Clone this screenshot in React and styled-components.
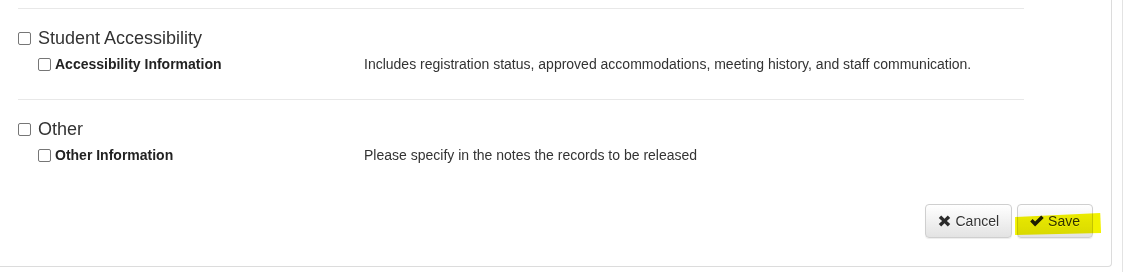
import React from 'react';
import styled, { createGlobalStyle } from 'styled-components';

const GlobalStyle = createGlobalStyle`
  body {
    margin: 0;
    background: #fff;
    font-family: "Liberation Sans", Arial, sans-serif;
    color: #333;
  }
`;

const sections = [
  {
    title: 'Student Accessibility',
    items: [
      {
        label: 'Accessibility Information',
        description:
          'Includes registration status, approved accommodations, meeting history, and staff communication.',
      },
    ],
  },
  {
    title: 'Other',
    items: [
      {
        label: 'Other Information',
        description: 'Please specify in the notes the records to be released',
      },
    ],
  },
];

const RemoveIcon = () => (
  <svg width="13" height="12" viewBox="0 0 13 12">
    <path
      d="M0.8 2.9 L3.2 0.5 L6.5 3.7 L9.8 0.5 L12.2 2.9 L8.9 6 L12.2 9.1 L9.8 11.5 L6.5 8.3 L3.2 11.5 L0.8 9.1 L4.1 6 Z"
      fill="#2a2a2a"
    />
  </svg>
);

const OkIcon = () => (
  <svg width="14" height="12" viewBox="0 0 14 12">
    <path d="M0.2 6.4 L2.6 4 L5.1 6.5 L11.2 0.4 L13.7 2.9 L5.1 11.5 Z" fill="#1e1e1e" />
  </svg>
);

const App = () => {
  return (
    <>
      <GlobalStyle />
      <Wrapper>
        <Panel>
          <SectionList>
            {sections.map((section) => (
              <Section key={section.title}>
                <TitleRow>
                  <Check type="checkbox" />
                  <Title>{section.title}</Title>
                </TitleRow>
                {section.items.map((item) => (
                  <ItemRow key={item.label}>
                    <ItemLabel>
                      <Check type="checkbox" />
                      <strong>{item.label}</strong>
                    </ItemLabel>
                    <Description>{item.description}</Description>
                  </ItemRow>
                ))}
              </Section>
            ))}
          </SectionList>
          <Footer>
            <Button>
              <RemoveIcon /> Cancel
            </Button>
            <SaveWrap>
              <Button>
                <OkIcon /> Save
              </Button>
              <Highlight />
            </SaveWrap>
          </Footer>
        </Panel>
      </Wrapper>
    </>
  );
};

const Wrapper = styled.div`
  width: 1123px;
  box-sizing: border-box;
  border-right: 1px solid #e3e3e3;
  height: 272px;
`;

const Panel = styled.div`
  width: 1112px;
  height: 267px;
  box-sizing: border-box;
  border-right: 1px solid #dcdcdc;
  border-bottom: 1px solid #dcdcdc;
  border-bottom-right-radius: 4px;
  padding-top: 8px;
  display: flex;
  flex-direction: column;
`;

const SectionList = styled.div`
  margin-left: 18px;
  width: 1006px;
`;

const Section = styled.div`
  border-top: 1px solid #e8e8e8;
  padding: 19px 0 25px;
`;

const TitleRow = styled.label`
  display: flex;
  align-items: center;
  gap: 7px;
  height: 20px;
`;

const Check = styled.input`
  appearance: none;
  -webkit-appearance: none;
  box-sizing: border-box;
  width: 13px;
  height: 13px;
  margin: 0;
  flex: none;
  border: 1px solid #767676;
  border-radius: 2px;
  background: #fff;
`;

const Title = styled.span`
  font-size: 18px;
  line-height: 20px;
  color: #333;
`;

const ItemRow = styled.div`
  display: grid;
  grid-template-columns: 326px 1fr;
  align-items: center;
  margin: 6px 0 0 20px;
  height: 20px;
  font-size: 14px;
`;

const ItemLabel = styled.label`
  display: flex;
  align-items: center;
  gap: 4px;

  strong {
    font-weight: bold;
    color: #222;
  }
`;

const Description = styled.span`
  color: #333;
`;

const Footer = styled.div`
  display: flex;
  justify-content: flex-end;
  gap: 5px;
  padding: 14px 18px 0 0;
`;

const SaveWrap = styled.div`
  position: relative;
`;

const Button = styled.button`
  display: inline-flex;
  align-items: center;
  gap: 4px;
  height: 34px;
  padding: 0 12px;
  font-family: "Liberation Sans", Arial, sans-serif;
  font-size: 14px;
  color: #333;
  background: linear-gradient(to bottom, #fff 0%, #e3e3e3 100%);
  border: 1px solid #cfcfcf;
  border-radius: 4px;
  box-shadow: 0 1px 1px rgba(0, 0, 0, 0.075);
  text-shadow: 0 1px 0 #fff;

  svg {
    margin-top: -1px;
  }
`;

const Highlight = styled.span`
  position: absolute;
  left: -2px;
  top: 9px;
  width: 86px;
  height: 22px;
  background: #f2f200;
  mix-blend-mode: multiply;
  clip-path: polygon(0 18%, 99% 0, 100% 91%, 0 100%);
  pointer-events: none;
`;

export default App;
